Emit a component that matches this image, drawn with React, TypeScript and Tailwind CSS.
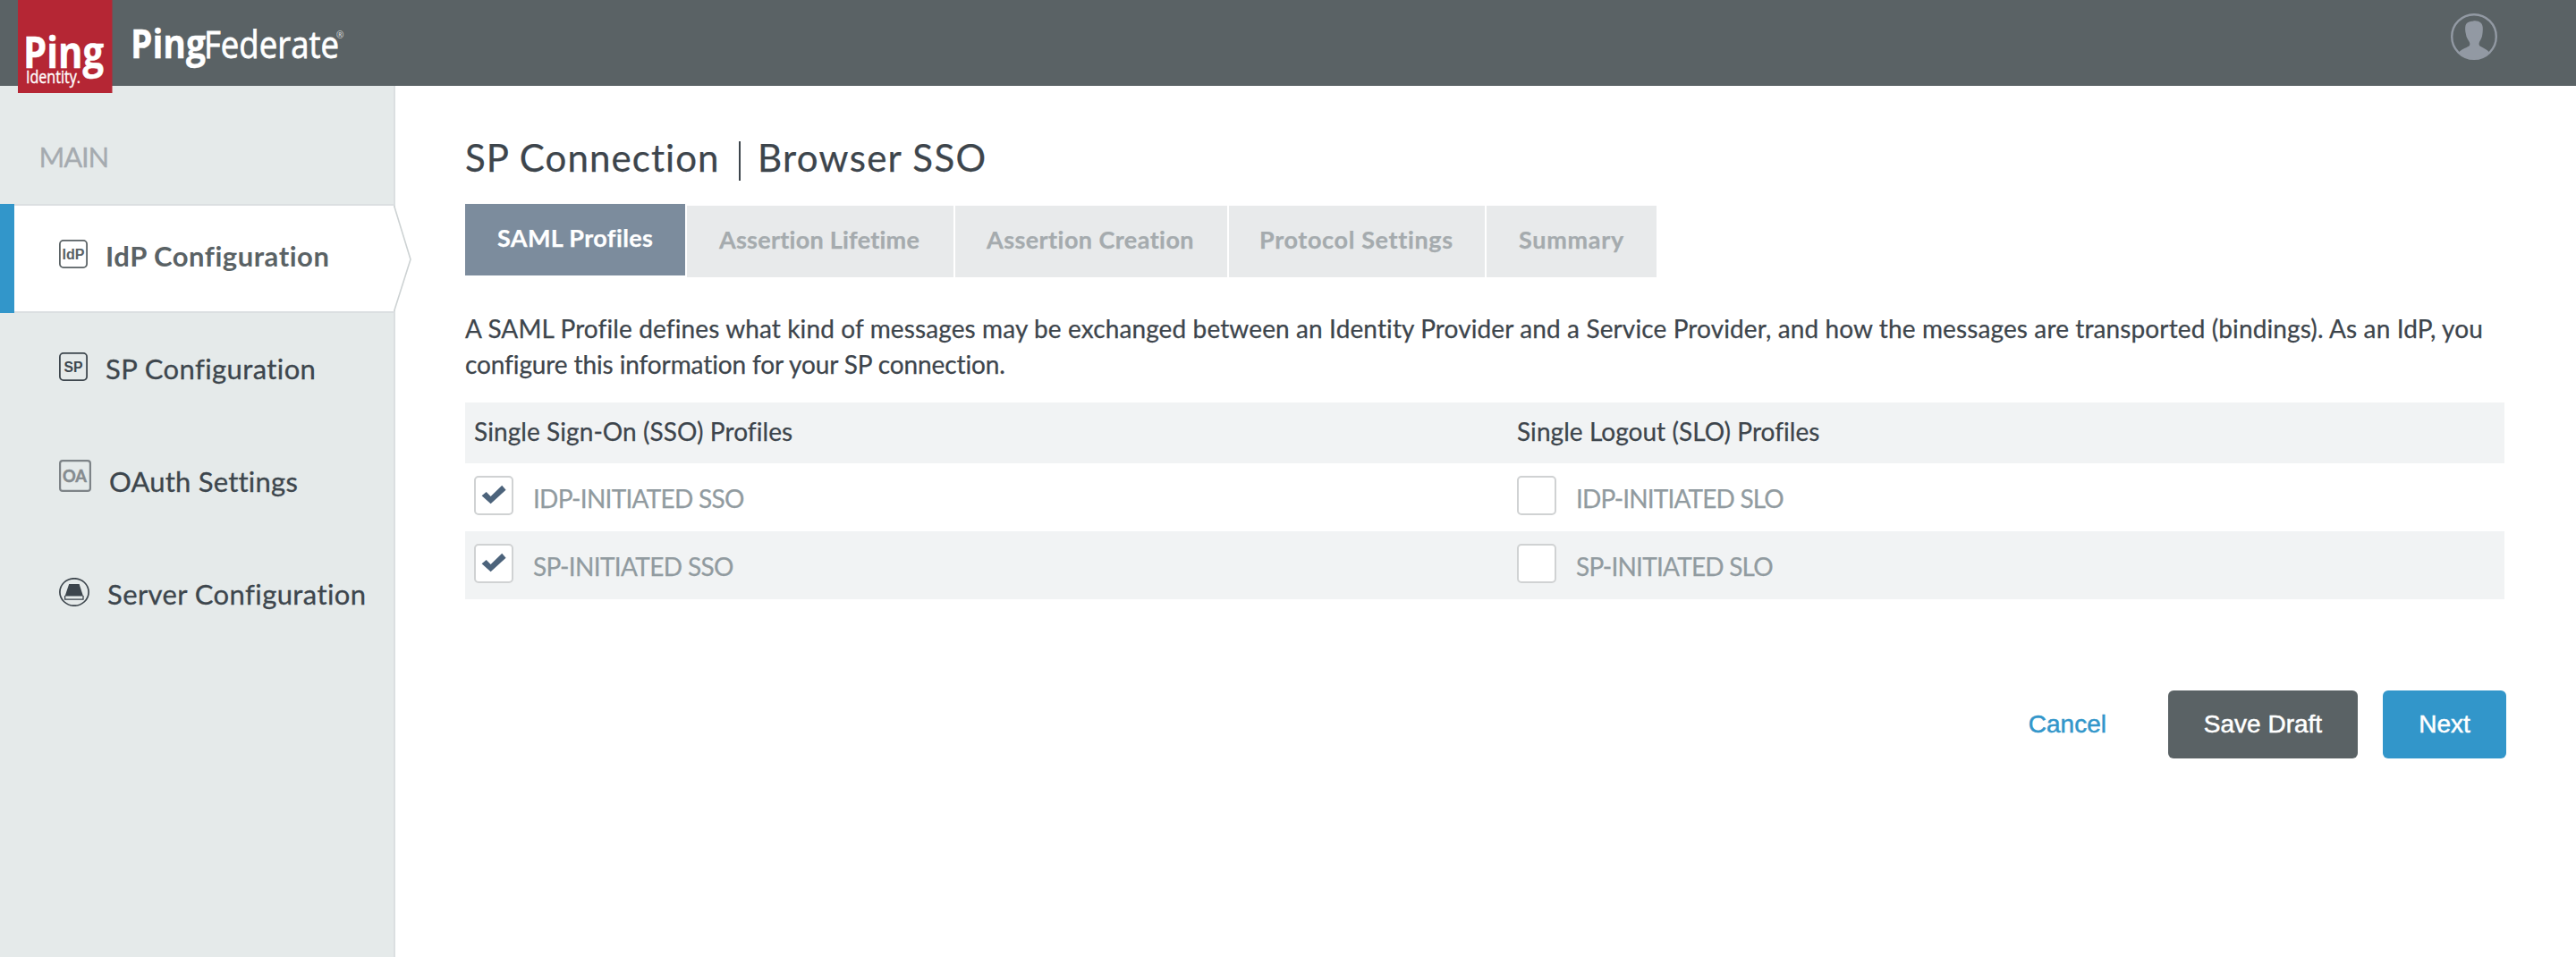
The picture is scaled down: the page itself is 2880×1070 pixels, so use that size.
import React from "react";

function PingIdentityLogo() {
  return (
    <svg className="block h-[104px] w-[106px] shrink-0" viewBox="0 0 106 104">
      <rect width="105.5" height="104" fill="#b52634" />
      <g fill="#ffffff" stroke="#ffffff" fontFamily="'Open Sans', sans-serif">
        <text x="6" y="76" fontSize="49" fontWeight="700" strokeWidth="0.5" textLength="90" lengthAdjust="spacingAndGlyphs">Ping</text>
        <text x="9" y="93" fontSize="20" strokeWidth="0.4" textLength="61" lengthAdjust="spacingAndGlyphs">Identity.</text>
      </g>
    </svg>
  );
}

function PingFederateLogo() {
  return (
    <svg className="block h-[96px] w-[260px] shrink-0" viewBox="0 0 260 96">
      <g fill="#ffffff" stroke="#ffffff" fontFamily="'Open Sans', sans-serif">
        <text x="16" y="64.5" fontSize="44.5" fontWeight="700" strokeWidth="0.4" textLength="84" lengthAdjust="spacingAndGlyphs">Ping</text>
        <text x="98" y="64.5" fontSize="42.5" strokeWidth="0.8" textLength="151" lengthAdjust="spacingAndGlyphs">Federate</text>
        <text x="246" y="43" fontSize="10" stroke="none" opacity="0.8">®</text>
      </g>
    </svg>
  );
}

function Avatar() {
  return (
    <svg className="block size-[52px]" viewBox="0 0 52 52">
      <circle cx="26" cy="26" r="24.8" fill="none" stroke="#9299a3" strokeWidth="2.4" />
      <path d="M9 43.5 C12 40 17 38.5 19.5 37 C21.5 36 21.8 34.5 20.8 32 C19 29 17.3 26.5 17 23.5 C16 20 15.8 16 16.5 13.5 C18 9.5 21.5 9 24.5 8.8 C27 7.8 31 8.3 33.5 10.5 C36.3 13 36.2 18 35.4 23 C35 27 33.5 29.5 32 32 C31 34.5 31.5 36 33.5 37 C36.5 38.7 40.5 40.2 43 43.5 C38 49.5 32 51.2 26 51.2 C20 51.2 13.5 49 9 43.5 Z" fill="#9299a3" />
    </svg>
  );
}

function BadgeIcon({ label, color }: { label: string; color: string }) {
  return (
    <svg className="block size-8 shrink-0" viewBox="0 0 32 32">
      <rect x="0.9" y="0.9" width="30.2" height="30.2" rx="4" fill="none" stroke={color} strokeWidth="1.8" />
      <text x="16" y="21.6" textAnchor="middle" fontFamily="'Liberation Sans', sans-serif" fontWeight="700" fontSize="16" fill={color} textLength={label.length === 3 ? 25 : 21} lengthAdjust="spacingAndGlyphs">{label}</text>
    </svg>
  );
}

function OAuthIcon() {
  return (
    <svg className="-mt-1.5 block size-9 shrink-0" viewBox="0 0 36 36">
      <rect x="1.1" y="1.1" width="33.8" height="33.8" rx="3" fill="none" stroke="#7d8387" strokeWidth="2.2" />
      <text x="17.5" y="24.8" textAnchor="middle" fontFamily="Lato, sans-serif" fontWeight="700" fontSize="19.5" fill="#858b8f" stroke="#858b8f" strokeWidth="0.5" textLength="27" lengthAdjust="spacingAndGlyphs">OA</text>
    </svg>
  );
}

function ServerIcon() {
  return (
    <svg className="block h-8 w-[34px] shrink-0" viewBox="0 0 34 32">
      <ellipse cx="17" cy="16" rx="16.1" ry="15.2" fill="none" stroke="#3d464d" strokeWidth="1.7" />
      <path d="M11.2 7 H22.6 L27 20.6 H6.6 Z" fill="#3d464d" />
      <path d="M6.6 20 V24.2 H27 V20" fill="none" stroke="#3d464d" strokeWidth="1.3" />
    </svg>
  );
}

function ActivePointer() {
  return (
    <svg className="absolute -top-0.5 left-[440px] h-[122px] w-[22px]" viewBox="0 0 22 122">
      <path d="M0 2 L0.6 2 L19 62 L0.6 120 L0 120 Z" fill="#ffffff" />
      <path d="M0.6 2 L19 62 L0.6 120" fill="none" stroke="#cdd2d3" strokeWidth="1.6" />
    </svg>
  );
}

function Sidebar() {
  return (
    <nav className="w-[442px] shrink-0 border-r-2 border-[#dbdfe1] bg-[#e5eaea] text-[31px] leading-9 text-[#3d464d] [-webkit-text-stroke:0.3px]">
      <div className="pt-[61px] pb-[35px] pl-[43.5px] tracking-[-1.15px] text-[#a5abb0]">MAIN</div>
      <div className="relative flex h-[122px] w-[440px] gap-5 border-y-2 border-[#dbdfe1] bg-white pt-[38px] pl-[66px] font-bold text-[#5a6265] [-webkit-text-stroke:0px]">
        <div className="absolute -top-0.5 left-0 h-[122px] w-4 bg-[#3296ca]" />
        <BadgeIcon label="IdP" color="#5a6265" />
        <span className="tracking-[0.52px]">IdP Configuration</span>
        <ActivePointer />
      </div>
      <div className="mt-1 flex h-[122px] gap-5 pt-10 pl-[66px]">
        <BadgeIcon label="SP" color="#3d464d" />
        <span className="tracking-[0.4px]">SP Configuration</span>
      </div>
      <div className="mt-1 flex h-[122px] gap-5 pt-10 pl-[66px]">
        <OAuthIcon />
        <span className="tracking-[0.22px]">OAuth Settings</span>
      </div>
      <div className="mt-1 flex h-[122px] gap-5 pt-10 pl-[66px]">
        <ServerIcon />
        <span className="tracking-[0.41px]">Server Configuration</span>
      </div>
    </nav>
  );
}

const tabs = [
  { label: "Assertion Lifetime", box: "w-[298px] pl-[36px] tracking-[0.25px]" },
  { label: "Assertion Creation", box: "w-[304px] pl-[35px] tracking-[0.43px]" },
  { label: "Protocol Settings", box: "w-[286px] pl-[34px] tracking-[0.64px]" },
  { label: "Summary", box: "w-[190px] pl-[36px] tracking-[0.7px]" },
];

function Checkbox({ checked }: { checked?: boolean }) {
  return (
    <span className="mt-3.5 flex size-11 shrink-0 rounded-[5px] border-2 border-[#d0d2d3] bg-white">
      {checked && (
        <svg className="block size-10" viewBox="0 0 40 40">
          <path d="M6.6 20.3 L11.7 16 L16.6 21 L29.2 8.8 L33.6 13.8 L16.6 29.2 Z" fill="#4c637b" />
        </svg>
      )}
    </span>
  );
}

function Option({ label, tracking, checked }: { label: string; tracking: string; checked?: boolean }) {
  return (
    <label className="flex gap-[22px] pl-2.5">
      <Checkbox checked={checked} />
      <span className={"mt-[21px] leading-9 text-[#919ba0] " + tracking}>{label}</span>
    </label>
  );
}

export default function App() {
  return (
    <div className="flex h-[1070px] w-[2880px] flex-col overflow-hidden bg-white font-[Lato,sans-serif] text-[#3d454c]">
      <header className="relative z-10 flex h-24 shrink-0 items-start bg-[#5a6265] pl-5">
        <PingIdentityLogo />
        <span className="ml-1"><PingFederateLogo /></span>
        <span className="mt-[15px] mr-[88px] ml-auto"><Avatar /></span>
      </header>
      <div className="flex min-h-0 flex-1">
        <Sidebar />
        <main className="w-[2360px] pl-[78px] [-webkit-text-stroke:0.25px]">
          <h1 className="flex h-[132px] pt-[58px] text-[42px] leading-[44px]">
            <span className="w-[306px] tracking-[1.08px]">SP Connection</span>
            <span className="mt-1 h-11 w-0.5 bg-[#3d454c]" />
            <span className="ml-[19px] tracking-[1.3px]">Browser SSO</span>
          </h1>
          <div className="flex items-start gap-0.5 text-[27px] font-bold">
            <div className="flex h-20 w-[246px] items-center bg-[#7c8c9d] pb-[3px] pl-9 tracking-[0.38px] text-white">SAML Profiles</div>
            {tabs.map((t) => (
              <div key={t.label} className={"mt-0.5 flex h-20 items-center bg-[#e8eaeb] pb-[3px] text-[#a5abae] " + t.box}>{t.label}</div>
            ))}
          </div>
          <p className="pt-[37px] text-[28px] leading-10 whitespace-nowrap">
            <span className="block tracking-[0.115px]">A SAML Profile defines what kind of messages may be exchanged between an Identity Provider and a Service Provider, and how the messages are transported (bindings). As an IdP, you</span>
            <span className="block tracking-[-0.11px]">configure this information for your SP connection.</span>
          </p>
          <section className="mt-[23px] w-[2280px] text-[28px]">
            <div className="grid h-[68px] grid-cols-[1166px_1fr] items-center bg-[#f1f3f4] pb-1">
              <span className="pl-2.5 tracking-[0.08px]">Single Sign-On (SSO) Profiles</span>
              <span className="pl-2.5 tracking-[0.05px]">Single Logout (SLO) Profiles</span>
            </div>
            <div className="grid h-[76px] grid-cols-[1166px_1fr]">
              <Option label="IDP-INITIATED SSO" tracking="tracking-[-0.73px]" checked />
              <Option label="IDP-INITIATED SLO" tracking="tracking-[-0.85px]" />
            </div>
            <div className="grid h-[76px] grid-cols-[1166px_1fr] bg-[#f1f3f4]">
              <Option label="SP-INITIATED SSO" tracking="tracking-[-0.65px]" checked />
              <Option label="SP-INITIATED SLO" tracking="tracking-[-0.78px]" />
            </div>
          </section>
          <div className="mt-[102px] flex h-[76px] w-[2282px] items-center justify-end font-['Liberation_Sans',sans-serif] text-[28px] [-webkit-text-stroke:0.5px]">
            <button className="mr-[69px] text-[#3296ca]">Cancel</button>
            <button className="mr-7 h-[76px] w-[212px] rounded-md bg-[#5a6265] text-white">Save Draft</button>
            <button className="h-[76px] w-[138px] rounded-md bg-[#3296ca] text-white">Next</button>
          </div>
        </main>
      </div>
    </div>
  );
}
